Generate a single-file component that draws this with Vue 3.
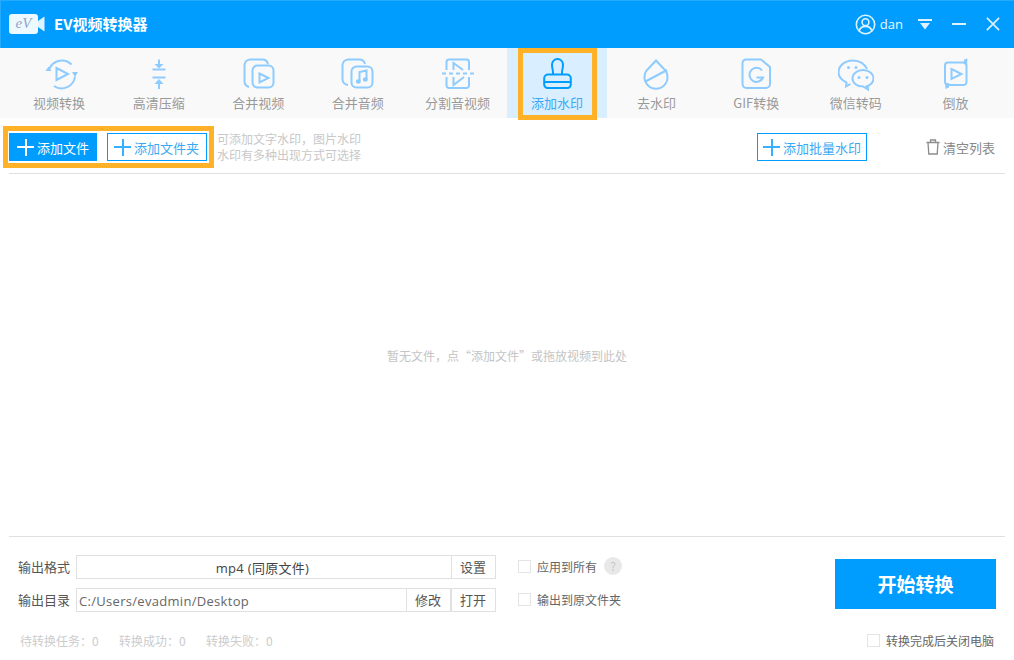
<template>
  <div class="app">
    <!-- 标题栏 -->
    <header class="titlebar">
      <div class="logo">
        <span class="logo-body">eV</span>
        <svg class="logo-lens" width="7" height="16" viewBox="0 0 7 16"><path d="M0 5 6.500 0.500V15.500L0 11Z" fill="#dff2ff" /></svg>
      </div>
      <span class="app-name">EV视频转换器</span>
      <div class="title-right">
        <svg class="user-icon" width="21" height="21" viewBox="0 0 21 21" fill="none" stroke="#dff2ff" stroke-width="1.600">
          <circle cx="10.500" cy="10.500" r="9.200" />
          <circle cx="10.500" cy="8.200" r="3.400" />
          <path d="M4 17.200c1-3.400 3.600-4.800 6.500-4.800s5.500 1.400 6.500 4.800" />
        </svg>
        <span class="user-name">dan</span>
        <svg class="win-menu" width="14" height="11" viewBox="0 0 14 11"><path d="M0 0H14V2H0ZM2 4H12L7 10.500Z" fill="#dff2ff" /></svg>
        <svg class="win-min" width="14" height="14" viewBox="0 0 14 14"><path d="M0 6H14V8H0Z" fill="#dff2ff" /></svg>
        <svg class="win-close" width="14" height="14" viewBox="0 0 15 15" fill="none" stroke="#dff2ff" stroke-width="1.700"><path d="M1 1 14 14M14 1 1 14" /></svg>
      </div>
    </header>

    <!-- 功能tab -->
    <nav class="tabs">
      <div v-for="t in tabs" :key="t.label" class="tab" :class="{ active: t.active }">
        <svg class="tab-icon" width="36" height="36" viewBox="0 0 36 36">
          <path v-for="d in t.lines" :key="d" :d="d" class="ln" />
          <path v-for="d in t.fills || []" :key="d" :d="d" class="fl" />
        </svg>
        <span class="tab-label">{{ t.label }}</span>
        <i v-if="t.active" class="mark mark-tab"></i>
      </div>
    </nav>

    <div class="toolbar">
      <div class="add-group">
        <button class="btn btn-primary"><span class="plus"></span>添加文件</button>
        <button class="btn btn-line btn-folder"><span class="plus"></span>添加文件夹</button>
        <i class="mark mark-add"></i>
      </div>
      <div class="hint">可添加文字水印，图片水印<br />水印有多种出现方式可选择</div>
      <button class="btn btn-line btn-batch"><span class="plus"></span>添加批量水印</button>
      <div class="clear">
        <svg width="14" height="16" viewBox="0 0 14 16" fill="none" stroke="#8c8c8c" stroke-width="1.300">
          <path d="M0.500 3.500H13.500M4.500 3.500V1H9.500V3.500M2 3.500 2.800 15H11.200L12 3.500" />
        </svg>
        <span>清空列表</span>
      </div>
    </div>

    <main class="list">暂无文件，点“添加文件”或拖放视频到此处</main>

    <footer class="footer">
      <div class="out">
        <div class="out-row">
          <label>输出格式</label>
          <div class="field field-center">mp4 (同原文件)</div>
          <button class="cell">设置</button>
        </div>
        <div class="out-row">
          <label>输出目录</label>
          <div class="field">C:/Users/evadmin/Desktop</div>
          <button class="cell">修改</button>
          <button class="cell">打开</button>
        </div>
        <div class="stats">
          <span>待转换任务：0</span>
          <span>转换成功：0</span>
          <span>转换失败：0</span>
        </div>
      </div>
      <div class="opts">
        <div class="opt"><i class="check"></i>应用到所有<span class="help">?</span></div>
        <div class="opt"><i class="check"></i>输出到原文件夹</div>
      </div>
      <div class="go">
        <button class="start">开始转换</button>
        <div class="opt opt-off"><i class="check"></i>转换完成后关闭电脑</div>
      </div>
    </footer>
  </div>
</template>

<script setup>
// 图标坐标都以36x36为基准
const tabs = [
  {
    label: '视频转换',
    lines: ['M7.500 11.500A13.500 13.500 0 0 1 29.500 7.500', 'M33 19.500A13.500 13.500 0 0 1 12 29', 'M14.500 11 26 17 14.500 23Z'],
    fills: ['M3.500 14H9.500L6.500 9.500Z', 'M30 15H36L33 20Z'],
  },
  {
    label: '高清压缩',
    lines: ['M18 2.500V9', 'M11.500 12.500H24.500', 'M11.500 20.500H24.500', 'M18 25V32'],
    fills: ['M13.500 7H22.500L18 11.500Z', 'M13.500 27H22.500L18 22Z'],
  },
  {
    label: '合并视频',
    lines: ['M8 30A6 6 0 0 1 3.500 24V8A6 6 0 0 1 9.500 2.500H21A6 6 0 0 1 27 7', 'M16.500 8.500H27.500A5 5 0 0 1 32.500 13.500V25.500A5 5 0 0 1 27.500 30.500H16.500A5 5 0 0 1 11.500 25.500V13.500A5 5 0 0 1 16.500 8.500Z', 'M18.500 16.500 27.500 21 18.500 25.500Z'],
  },
  {
    label: '合并音频',
    lines: ['M8 28A6 6 0 0 1 2.500 22V8A6 6 0 0 1 8.500 2.500H19A6 6 0 0 1 25 7', 'M16.500 9.500H27.500A5 5 0 0 1 32.500 14.500V25.500A5 5 0 0 1 27.500 30.500H16.500A5 5 0 0 1 11.500 25.500V14.500A5 5 0 0 1 16.500 9.500Z', 'M19.500 24V15L26.500 13.500V22'],
    fills: ['M15.800 24.500a2.500 2.200 0 1 0 5 0a2.500 2.200 0 1 0-5 0ZM22.800 22.500a2.500 2.200 0 1 0 5 0a2.500 2.200 0 1 0-5 0Z'],
  },
  {
    label: '分割音视频',
    lines: ['M6.500 13V5A2.500 2.500 0 0 1 9 2.500H26.500A2.500 2.500 0 0 1 29 5V13', 'M6.500 20V28.500A2.500 2.500 0 0 0 9 31H26.500A2.500 2.500 0 0 0 29 28.500V20', 'M13.500 13V6L23 13', 'M13.500 20V28L24 20', 'M2 16.500H6M9 16.500H13M16 16.500H20M23 16.500H27M30 16.500H34'],
  },
  {
    label: '添加水印',
    active: true,
    lines: ['M13 17.500V15.500C13 12.500 12 11.500 12 7.500A5.500 5.500 0 0 1 23 7.500C23 11.500 22 12.500 22 15.500V17.500', 'M8 17.500H27A3.800 3.800 0 0 1 30.800 21.300V27.500A3.500 3.500 0 0 1 27.300 31H7.700A3.500 3.500 0 0 1 4.200 27.500V21.300A3.800 3.800 0 0 1 8 17.500Z', 'M4.500 25H30.500'],
  },
  {
    label: '去水印',
    lines: ['M17 3.500 24.500 11.500A11.500 11.500 0 1 1 9.500 11.500Z', 'M6.500 24.500 28 13'],
  },
  {
    label: 'GIF转换',
    lines: ['M7 2.500H22L31 10V27A4 4 0 0 1 27 31H7.500A4 4 0 0 1 3.500 27V6A3.500 3.500 0 0 1 7 2.500Z', 'M23 13.500A7 7 0 1 0 24 20.500H17.500'],
  },
  {
    label: '微信转码',
    lines: ['M12.500 27 8 29.500 8.500 25.500C3.500 23 0.500 19.500 0.500 15.500C0.500 8.500 7 3.500 15 3.500C21.500 3.500 27 7 29 12', 'M27.500 29.500C32 29 35.500 25.500 35.500 21.500C35.500 17 31 13 25 13C19 13 14.500 17 14.500 21.500C14.500 26 19 29.500 25 29.500L30 32.500 29.500 29'],
    fills: ['M9 10.500a1.500 1.500 0 1 0 3 0a1.500 1.500 0 1 0-3 0ZM16.500 10.500a1.500 1.500 0 1 0 3 0a1.500 1.500 0 1 0-3 0ZM19.500 20.500a1.500 1.500 0 1 0 3 0a1.500 1.500 0 1 0-3 0ZM27.500 20.500a1.500 1.500 0 1 0 3 0a1.500 1.500 0 1 0-3 0Z'],
  },
  {
    label: '倒放',
    lines: ['M27 5.500H10A3 3 0 0 0 7 8.500V24.500A3.500 3.500 0 0 0 10 28', 'M9 28H25.500A3 3 0 0 0 28.500 25V9A3.500 3.500 0 0 0 25.500 5.500', 'M13.500 12 23.500 17 13.500 22Z'],
    fills: ['M26 2.500 29.500 1.500 29 8.500 26 7Z', 'M11 26 7 26.500 7.500 32 11 30.500Z'],
  },
]
</script>

<style scoped>
.app {
  width: 1014px;
  height: 660px;
  display: flex;
  flex-direction: column;
  background: #fff;
  font-family: "Noto Sans CJK SC", "Open Sans", sans-serif;
  color: #555;
  overflow: hidden;
}
button {
  font-family: inherit;
  padding: 0;
  background: #fff;
  cursor: pointer;
}

.titlebar {
  box-sizing: border-box;
  height: 48px;
  display: flex;
  align-items: center;
  background: #009dff;
  box-shadow: inset 1px 1px 0 rgba(255, 255, 255, 0.14);
  padding-left: 9px;
  color: #fff;
  flex-shrink: 0;
}
.logo {
  display: flex;
  align-items: center;
  width: 36px;
}
.logo-body {
  width: 29px;
  height: 20px;
  border-radius: 3px;
  background: #eef8ff;
  color: #8ea6c8;
  font: italic 15px/19px "Liberation Serif", serif;
  text-align: center;
}
.app-name {
  margin: -1px 0 0 9px;
  font-size: 15px;
  font-weight: 700;
}
.title-right {
  margin-left: auto;
  display: flex;
  align-items: center;
  padding-right: 14px;
}
.user-name {
  margin-left: 4px;
  font: 13px "Open Sans", sans-serif;
  color: #eaf7ff;
}
.win-menu { margin-left: 15px; }
.win-min { margin-left: 20px; }
.win-close { margin-left: 20px; }

.tabs {
  height: 70px;
  display: flex;
  padding: 0 9px;
  background: #f9f9f9;
  flex-shrink: 0;
}
.tab {
  position: relative;
  flex: 1;
  display: flex;
  flex-direction: column;
  align-items: center;
  padding: 9px 0 0 0.5px;
  box-sizing: border-box;
}
.tab.active { background: #d9efff; }
.tab-icon {
  display: block;
  margin-left: 1px;
}
.ln {
  fill: none;
  stroke: #8ecbff;
  stroke-width: 2;
}
.fl { fill: #8ecbff; }
.active .ln { stroke: #009dff; }
.active .fl { fill: #009dff; }
.tab-label {
  font-size: 13px;
  line-height: 20px;
  color: #999;
}
.active .tab-label { color: #3aa9f5; }

/* 橙色标注框 */
.mark {
  position: absolute;
  box-sizing: border-box;
  border: 5px solid #ffb128;
  pointer-events: none;
}
.mark-tab {
  left: 11px;
  top: 0;
  width: 79px;
  height: 72px;
  z-index: 2;
}
.mark-add {
  left: -6px;
  top: -7px;
  width: 211px;
  height: 42px;
}

.toolbar {
  height: 40px;
  margin: 0 9px;
  border-bottom: 1px solid #e0e0e0;
  display: flex;
  align-items: flex-start;
  padding: 15px 10px 0 0;
  flex-shrink: 0;
}
.add-group {
  position: relative;
  display: flex;
  gap: 10px;
}
.btn {
  height: 28px;
  box-sizing: border-box;
  display: flex;
  align-items: center;
  font-size: 13px;
  border: 1px solid #009dff;
  white-space: nowrap;
}
.btn-primary {
  width: 88px;
  padding-left: 7px;
  background: #009dff;
  color: #fff;
}
.btn-line {
  color: #3aa9f5;
  padding-left: 5px;
}
.btn-folder {
  width: 100px;
  padding-left: 6px;
}
.btn-batch {
  width: 110px;
  margin-left: auto;
}
.plus {
  width: 17px;
  height: 17px;
  margin-right: 3px;
  background: linear-gradient(currentColor, currentColor) center / 100% 2px no-repeat,
    linear-gradient(currentColor, currentColor) center / 2px 100% no-repeat;
}
.btn-line .plus { color: #38b0ff; }
.hint {
  margin: -2px 0 0 10px;
  font-size: 12px;
  line-height: 16px;
  color: #c8c8c8;
}
.clear {
  width: 69px;
  margin-left: 59px;
  display: flex;
  align-items: center;
  gap: 3px;
  height: 28px;
  font-size: 13px;
  color: #888;
}

.list {
  flex: 1;
  display: flex;
  align-items: center;
  justify-content: center;
  font-size: 12px;
  color: #c4c4c4;
}

.footer {
  height: 124px;
  box-sizing: border-box;
  margin: 0 9px;
  padding: 18px 9px 0;
  border-top: 1px solid #e0e0e0;
  display: flex;
  flex-shrink: 0;
}
.out { width: 478px; }
.out-row {
  display: flex;
  height: 24px;
  margin-bottom: 9px;
}
.out-row label {
  width: 58px;
  font-size: 13px;
  line-height: 24px;
  color: #555;
}
.field {
  flex: 1;
  box-sizing: border-box;
  border: 1px solid #e0e0e0;
  border-right: none;
  padding: 1px 0 0 2px;
  font: 13px/22px "Open Sans", "Noto Sans CJK SC", sans-serif;
  letter-spacing: 0.3px;
  color: #666;
}
.field-center {
  padding: 1px 3px 0 0;
  text-align: center;
  color: #444;
}
.cell {
  width: 45px;
  box-sizing: border-box;
  border: 1px solid #e0e0e0;
  padding: 0 1px 2px 0;
  font-size: 13px;
  color: #555;
}
.stats {
  display: flex;
  margin: 22px 0 0 2px;
  font-size: 12px;
  line-height: 14px;
  color: #ccc;
}
.stats span { width: 99px; }
.stats span + span { width: 87px; }
.opts {
  margin: -1px 0 0 22px;
  display: flex;
  flex-direction: column;
  gap: 9px;
}
.opt {
  height: 24px;
  display: flex;
  align-items: center;
  font-size: 12px;
  color: #666;
  white-space: nowrap;
}
.check {
  width: 13px;
  height: 13px;
  box-sizing: border-box;
  border: 1px solid #e4e4e4;
  margin-right: 6px;
}
.help {
  width: 18px;
  height: 18px;
  margin-left: 7px;
  border-radius: 50%;
  background: #e8e8e8;
  color: #c8c8c8;
  text-align: center;
  line-height: 18px;
}
.go {
  margin-left: auto;
  display: flex;
  flex-direction: column;
  align-items: flex-end;
}
.start {
  width: 161px;
  height: 50px;
  margin-top: 4px;
  padding-bottom: 2px;
  border: none;
  background: #009dff;
  color: #fff;
  font-size: 19px;
  font-weight: 700;
}
.opt-off {
  margin: 19px 2px 0 0;
}
</style>

<style>
html, body { background: #fff; }
</style>
